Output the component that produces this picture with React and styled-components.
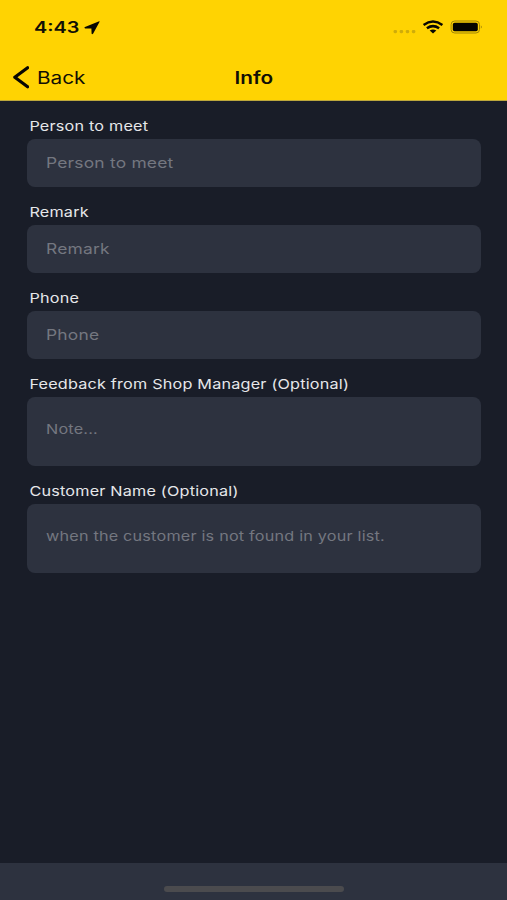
import styled, { createGlobalStyle } from 'styled-components';

const GlobalStyle = createGlobalStyle`
    body {
        margin: 0;
        background-color: #191d28;
    }
    * {
        box-sizing: border-box;
    }
`;

const Screen = styled.div`
    width: 100%;
    height: 900px;
    display: flex;
    flex-direction: column;
    overflow: hidden;
    background-color: #191d28;
    font-family: Inter, "Liberation Sans", sans-serif;
`;

const Header = styled.header`
    height: 101px;
    background-color: #ffd302;
    border-bottom: 1px solid #bda83c;
    color: #110f05;
`;

const StatusBar = styled.div`
    height: 54px;
    display: flex;
    justify-content: space-between;
    padding: 1px 24px 0 34px;
`;

const StatusGroup = styled.div`
    display: flex;
    align-items: center;
`;

const NavBar = styled.div`
    height: 46px;
    display: grid;
    grid-template-columns: 1fr auto 1fr;
    align-items: center;
`;

const BackButton = styled.div`
    display: flex;
    align-items: center;
    padding-left: 12px;
    gap: 8px;
`;

// wide lettering: the text is stretched sideways from its anchor
const Wide = styled.span`
    display: block;
    white-space: nowrap;
    line-height: 20px;
    transform: scaleX(${(props) => props.$stretch});
    transform-origin: ${(props) => props.$anchor || 'left'} center;
`;

const Time = styled(Wide)`
    width: 50px;
    line-height: 21px;
    font-size: 15.5px;
    font-weight: 600;
`;

const BackText = styled(Wide)`
    padding-top: 1px;
    font-size: 17px;
`;

const Title = styled(Wide)`
    padding-top: 1px;
    font-size: 17px;
    font-weight: 600;
`;

const Label = styled(Wide)`
    height: 24px;
    line-height: 22px;
    padding-left: 2px;
    font-size: 13.5px;
    letter-spacing: 0.17px;
    color: #e6e7ea;
`;

const Form = styled.main`
    flex: 1;
    display: flex;
    flex-direction: column;
    gap: 14px;
    padding: 14px 26px 0 27px;
`;

const Field = styled.div`
    height: ${(props) => (props.$tall ? '69px' : '48px')};
    padding: ${(props) => (props.$tall ? '22px' : '14px')} 19px 0;
    border-radius: 8px;
    background-color: #2d323f;
`;

const Placeholder = styled(Wide)`
    font-size: ${(props) => props.$size};
    letter-spacing: 0.17px;
    color: #747780;
`;

const Footer = styled.footer`
    height: 37px;
    display: flex;
    justify-content: center;
    padding: 23px 0 0 1px;
    background-color: #2d323f;
`;

const HomeIndicator = styled.div`
    width: 180px;
    height: 6px;
    border-radius: 3px;
    background-color: #4b4b4e;
`;

const fields = [
    { label: 'Person to meet', hint: 'Person to meet' },
    { label: 'Remark', hint: 'Remark' },
    { label: 'Phone', hint: 'Phone' },
    { label: 'Feedback from Shop Manager (Optional)', hint: 'Note...', tall: true },
    { label: 'Customer Name (Optional)', hint: 'when the customer is not found in your list.', tall: true },
];

function LocationArrow() {
    return (
        <svg width="16" height="14" viewBox="0 0 16 14">
            <path d="M15.6 0.8 L9.2 12.6 Q7.9 14 7.6 12.5 L7.4 7.6 L1.2 7.4 Q-0.4 6.9 1 6 L14.6 0.4 Q15.8 0.1 15.6 0.8Z" fill="#080702" />
        </svg>
    );
}

function StatusIcons() {
    return (
        <svg width="90" height="16" viewBox="0 0 90 16">
            <g fill="#cfac0a">
                <rect x="0.5" y="10" width="3.6" height="3.2" rx="1.4" />
                <rect x="6.6" y="10" width="3.6" height="3.2" rx="1.4" />
                <rect x="12.7" y="10" width="3.6" height="3.2" rx="1.4" />
                <rect x="18.8" y="10" width="3.6" height="3.2" rx="1.4" />
            </g>
            <g fill="none" stroke="#080702" strokeWidth="2.5">
                <path d="M30.6 4.9 Q40 -1.8 49.4 4.9" />
                <path d="M33.9 8.3 Q40 4 46.1 8.3" />
            </g>
            <path d="M36.7 10.6 Q40 8.4 43.3 10.6 L40 13.4Z" fill="#080702" />
            <rect x="58.1" y="1" width="28.4" height="12" rx="3.6" fill="none" stroke="#9f8509" />
            <rect x="59.8" y="2.8" width="25" height="8.4" rx="1.8" fill="#050400" />
            <path d="M87.9 5.2 Q89.7 7 87.9 8.8Z" fill="#8c750b" />
        </svg>
    );
}

function Chevron() {
    return (
        <svg width="17" height="24" viewBox="0 0 17 24">
            <path d="M15.6 2.7 L2.8 12.2 L15.6 21.7" fill="none" stroke="#080702" strokeWidth="3.2" strokeLinecap="round" strokeLinejoin="round" />
        </svg>
    );
}

export default function App() {
    return (
        <Screen>
            <GlobalStyle />
            <Header>
                <StatusBar>
                    <StatusGroup>
                        <Time $stretch={1.28}>4:43</Time>
                        <LocationArrow />
                    </StatusGroup>
                    <StatusGroup>
                        <StatusIcons />
                    </StatusGroup>
                </StatusBar>
                <NavBar>
                    <BackButton>
                        <Chevron />
                        <BackText $stretch={1.22}>Back</BackText>
                    </BackButton>
                    <Title $stretch={1.22} $anchor="center">Info</Title>
                </NavBar>
            </Header>
            <Form>
                {fields.map((field) => (
                    <div key={field.label}>
                        <Label $stretch={1.2}>{field.label}</Label>
                        <Field $tall={field.tall}>
                            <Placeholder $stretch={1.2} $size={field.tall ? '13.5px' : '14.5px'}>{field.hint}</Placeholder>
                        </Field>
                    </div>
                ))}
            </Form>
            <Footer>
                <HomeIndicator />
            </Footer>
        </Screen>
    );
}
